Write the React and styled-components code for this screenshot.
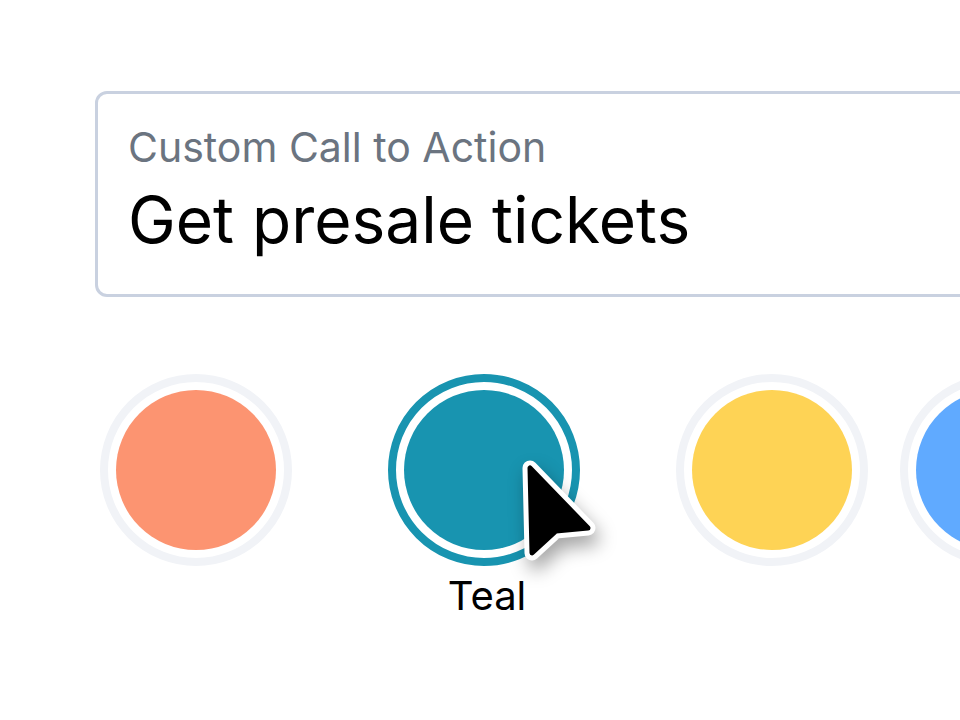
import React from "react";
import styled, { createGlobalStyle } from "styled-components";

const GlobalStyle = createGlobalStyle`
  html, body {
    margin: 0;
    padding: 0;
    background: #ffffff;
    overflow: hidden;
  }
  body {
    font-family: Inter, "Noto Sans", sans-serif;
  }
`;

const Page = styled.div`
  width: 960px;
  height: 720px;
  padding: 91px 0 0 95px;
  box-sizing: border-box;
  position: relative;
  overflow: hidden;
`;

const Field = styled.div`
  width: 960px;
  height: 206px;
  box-sizing: border-box;
  padding: 29px 30px 0 30px;
  border: 3px solid #c9d1e0;
  border-radius: 12px;
  display: flex;
  flex-direction: column;
`;

const FieldLabel = styled.div`
  font-size: 41px;
  line-height: 48px;
  color: #6b7480;
`;

const FieldValue = styled.div`
  margin-top: 11px;
  font-size: 64px;
  line-height: 76px;
  color: #000000;
`;

const SwatchRow = styled.div`
  display: flex;
  align-items: flex-start;
  margin-top: 77px;
  margin-left: 5px;
`;

const SwatchItem = styled.div`
  display: flex;
  flex-direction: column;
  align-items: center;
  flex-shrink: 0;
  width: 192px;
  margin-left: ${({ $offset }) => $offset || 0}px;
`;

const Ring = styled.div`
  width: 192px;
  height: 192px;
  box-sizing: border-box;
  border-radius: 50%;
  border: 8px solid ${({ $active, $color }) => ($active ? $color : "#f1f3f7")};
  padding: 8px;
  background: #ffffff;
`;

const Fill = styled.div`
  width: 160px;
  height: 160px;
  border-radius: 50%;
  background: ${({ $color }) => $color};
`;

const SwatchName = styled.div`
  margin-top: 6px;
  padding-left: 6px;
  font-size: 40px;
  line-height: 48px;
  color: #000000;
`;

const Cursor = styled.svg`
  position: absolute;
  left: 505px;
  top: 445px;
  width: 110px;
  height: 140px;
  overflow: visible;
  filter: drop-shadow(4px 10px 9px rgba(0, 0, 0, 0.35));
`;

const arrow = "M25 23 L27 108 L51 86 L83 83 Z";

const swatches = [
  { name: "Coral", color: "#fc9471", offset: 0 },
  { name: "Teal", color: "#1894b0", offset: 96, active: true },
  { name: "Yellow", color: "#fed355", offset: 96 },
  { name: "Blue", color: "#60aaff", offset: 32 },
];

const App = () => {
  return (
    <Page>
      <GlobalStyle />
      <Field>
        <FieldLabel>Custom Call to Action</FieldLabel>
        <FieldValue>Get presale tickets</FieldValue>
      </Field>
      <SwatchRow>
        {swatches.map((s) => (
          <SwatchItem key={s.name} $offset={s.offset}>
            <Ring $active={s.active} $color={s.color}>
              <Fill $color={s.color} />
            </Ring>
            {s.active && <SwatchName>{s.name}</SwatchName>}
          </SwatchItem>
        ))}
      </SwatchRow>
      <Cursor viewBox="0 0 110 140">
        <path d={arrow} fill="#ffffff" stroke="#ffffff" strokeWidth="15" strokeLinejoin="round" />
        <path d={arrow} fill="#000000" stroke="#000000" strokeWidth="5" strokeLinejoin="round" />
      </Cursor>
    </Page>
  );
};

export default App;
